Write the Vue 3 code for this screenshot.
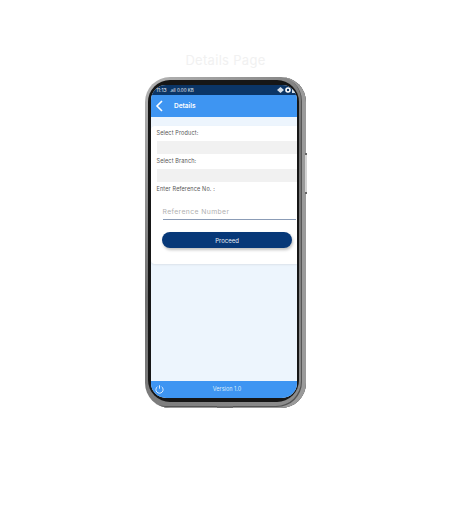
<script setup>
const fields = ['Select Product:', 'Select Branch:']
</script>

<template>
  <div class="page">
    <h1 class="title">Details Page</h1>
    <div class="phone">
      <span class="side-btn"></span>
      <span class="speaker"></span>
      <div class="bezel">
        <div class="screen">
          <div class="status">
            <span>11:13</span>
            <span class="carrier">.all 0.00 KB</span>
            <span class="status-right">
              <svg width="7" height="6" viewBox="0 0 7 6"><path d="M0 3 3.5 0 7 3 3.5 6z" fill="#d5dfea" /></svg>
              <svg width="6" height="6" viewBox="0 0 6 6"><circle cx="3" cy="3" r="2" fill="none" stroke="#fff" stroke-width="1.6" /></svg>
              <i class="batt"></i>
            </span>
          </div>
          <div class="header">
            <svg class="back" width="9" height="12" viewBox="0 0 9 12"><path d="M7 1 2 6l5 5" fill="none" stroke="#fff" stroke-width="1.6" /></svg>
            <span class="header-title">Details</span>
          </div>
          <div class="content">
            <div class="card">
              <template v-for="f in fields" :key="f">
                <label class="lbl">{{ f }}</label>
                <div class="select"></div>
              </template>
              <label class="lbl">Enter Reference No. :</label>
              <div class="ref">Reference Number</div>
              <button class="proceed">Proceed</button>
            </div>
          </div>
          <div class="footer">
            <svg class="power" width="9" height="9" viewBox="0 0 10 10"><path d="M2.8 1.8a4 4 0 1 0 4.4 0" fill="none" stroke="#fff" stroke-width=".9" /><path d="M5 .3v3.8" stroke="#fff" stroke-width=".9" /></svg>
            <span class="version">Version 1.0</span>
          </div>
        </div>
      </div>
    </div>
  </div>
</template>

<style scoped>
.page {
  width: 451px;
  height: 512px;
  overflow: hidden;
  display: flex;
  flex-direction: column;
  align-items: center;
  font-family: "Inter", "Liberation Sans", sans-serif;
}
.title {
  margin: 51px 0 0 0;
  height: 26px;
  font-size: 13px;
  line-height: 18px;
  font-weight: 400;
  letter-spacing: 0.3px;
  color: #f1f1f1;
}
.phone {
  position: relative;
  flex: none;
  width: 161px;
  height: 331px;
  box-sizing: border-box;
  padding: 3px 7px 6px 3px;
  border-radius: 25px;
  background: linear-gradient(135deg, #b5b5b5, #6f6f6f 45%, #8f8f8f);
  box-shadow: inset -4px -1px 0 #9a9a9a, inset -5px -2px 0 #555;
}
.side-btn {
  position: absolute;
  right: -1px;
  top: 76px;
  width: 2px;
  height: 37px;
  background: #d4d4d4;
  border-top: 2px solid #666;
  border-bottom: 2px solid #666;
}
.speaker {
  position: absolute;
  left: 72px;
  bottom: 0;
  width: 16px;
  height: 2px;
  background: #6a6a6a;
}
.bezel {
  height: 100%;
  box-sizing: border-box;
  padding: 5px 2px 4.5px 3px;
  border-radius: 22px;
  background: #161616;
}
.screen {
  height: 100%;
  display: flex;
  flex-direction: column;
  border-radius: 15px;
  overflow: hidden;
  background: #edf5fd;
}
.status {
  height: 10px;
  flex: none;
  background: #0b3566;
  color: #e6ecf3;
  font-size: 5px;
  display: flex;
  align-items: center;
  gap: 3px;
  padding: 0 2px 0 5px;
}
.carrier {
  font-size: 4.5px;
}
.status-right {
  margin-left: auto;
  display: flex;
  align-items: center;
  gap: 1px;
}
.batt {
  width: 3px;
  height: 5px;
  background: #d5dfea;
}
.header {
  height: 21.5px;
  flex: none;
  background: #3e95f2;
  display: flex;
  align-items: center;
  padding-left: 4px;
  color: #fff;
  font-size: 6.5px;
  font-weight: 600;
}
.header-title {
  margin-left: 10px;
}
.content {
  flex: 1;
  padding: 9.5px 0 0 0;
}
.card {
  height: 138px;
  box-sizing: border-box;
  background: #fff;
  border-radius: 4px 0 0 4px;
  box-shadow: 0 1px 2px rgba(0, 0, 0, 0.08);
  padding: 3.5px 0 0 5.5px;
  display: flex;
  flex-direction: column;
}
.lbl {
  font-size: 5.5px;
  line-height: 7px;
  color: #555;
  letter-spacing: 0.15px;
}
.select {
  height: 13.5px;
  margin: 4px 0 3.5px 0;
  background: #f1f1f1;
}
.ref {
  margin: 8px 1px 0 6px;
  height: 19px;
  line-height: 21px;
  box-sizing: border-box;
  border-bottom: 1px solid #8b9cb6;
  color: #b0b0b0;
  font-size: 6.8px;
  letter-spacing: 0.4px;
}
.proceed {
  margin: 12.5px 0 0 5.5px;
  width: 130px;
  height: 16px;
  padding: 0;
  border: none;
  border-radius: 8px;
  background: #073878;
  color: #e8eef6;
  font-family: inherit;
  font-size: 6px;
  box-shadow: 1px 2px 3px rgba(0, 0, 0, 0.25);
}
.footer {
  position: relative;
  height: 16.5px;
  flex: none;
  box-sizing: border-box;
  padding-left: 6px;
  background: #3e95f2;
  display: flex;
  align-items: center;
  justify-content: center;
  color: #dcebfb;
  font-size: 5.5px;
}
.power {
  position: absolute;
  left: 4px;
  top: 4px;
}
</style>
